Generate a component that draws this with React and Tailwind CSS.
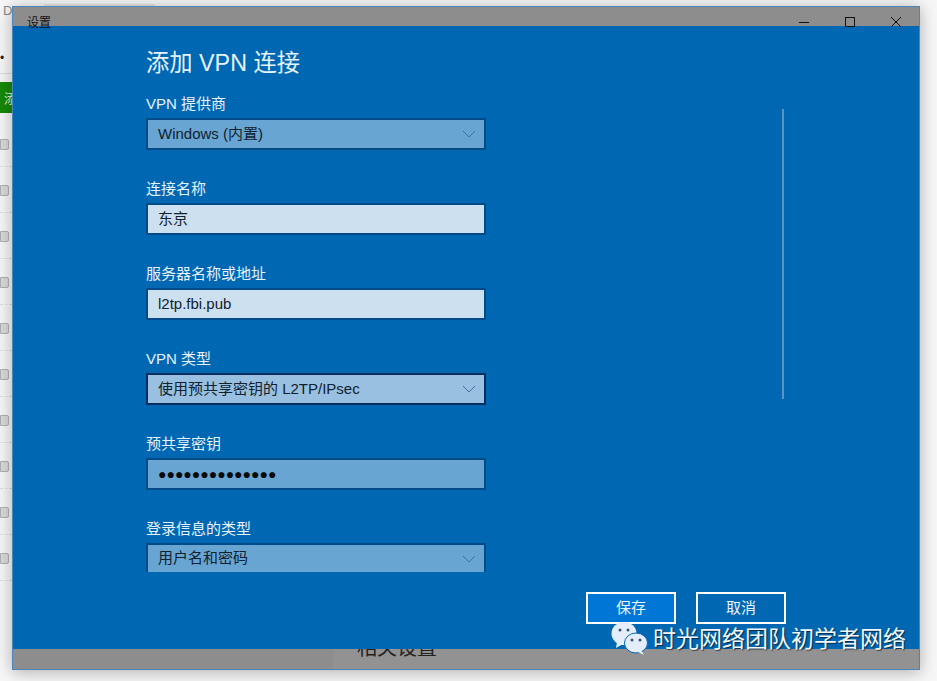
const CJK = "font-['Liberation_Sans','Noto_Sans_CJK_SC',sans-serif]";

function Chevron({ color = "#3a729f" }) {
  return (
    <svg width="14" height="8" viewBox="0 0 14 8" fill="none" stroke={color} strokeWidth="1">
      <path d="M1 1l6 6 6-6" />
    </svg>
  );
}

function Field({ label, value, bg = "bg-[#68a5d2]", border = "border-[#004b87]", chevron, clipBottom, mb = "mb-[29px]", valueClass = "text-[15px]" }) {
  return (
    <div className={mb}>
      <div className="h-[20px] mb-[4px] text-[15px] leading-[20px] text-[#e6f3fb]">{label}</div>
      <div
        className={`w-[340px] border-2 ${border} ${bg} ${clipBottom ? "border-b-0 h-[29px]" : "h-[32px]"} flex items-center justify-between pl-[10px] pr-[8px] text-[#10212f] ${valueClass}`}
      >
        <span>{value}</span>
        {chevron && <Chevron />}
      </div>
    </div>
  );
}

function Wechat() {
  return (
    <svg width="37" height="33" viewBox="0 0 37 33">
      <ellipse cx="13" cy="11.5" rx="12.5" ry="11.5" fill="#e4eefa" />
      <path d="M6 20l-1 6 7-4z" fill="#e4eefa" />
      <circle cx="9" cy="8" r="1.5" fill="#39566e" />
      <circle cx="17" cy="8" r="1.5" fill="#39566e" />
      <ellipse cx="25" cy="21" rx="11.5" ry="10" fill="#e4eefa" stroke="#0a67b0" strokeWidth="1" />
      <path d="M30 28l3 5-6-3z" fill="#e4eefa" />
      <circle cx="21" cy="18" r="1.5" fill="#39566e" />
      <circle cx="29" cy="18" r="1.5" fill="#39566e" />
    </svg>
  );
}

function LeftRow() {
  return (
    <div className="h-[46px] pt-[2px] border-b border-dashed border-[#dedede] flex items-center">
      <div className="w-[9px] h-[11px] bg-[#dadada] border border-[#b0b0b0] rounded-r-[2px]" />
    </div>
  );
}

export default function App() {
  const rows = Array.from({ length: 10 });
  return (
    <div className={`w-[937px] h-[681px] bg-[#f8f7f7] flex overflow-hidden relative ${CJK}`}>
      {/* page behind the window, left strip */}
      <div className="w-[12px] shrink-0 flex flex-col text-[#8a8a8a] text-[13px] overflow-hidden">
        <div className="h-[52px] pt-[2px] pl-[3px] leading-[18px]">D</div>
        <div className="h-[22px] border-b border-[#dddddd] text-[#222] text-[12px] leading-[12px]">•</div>
        <div className="mt-[8px] h-[31px] bg-[#178a08] text-[#d8f0d0] text-[13px] leading-[33px] pl-[4px] overflow-hidden whitespace-nowrap">添</div>
        <div className="h-[8px]" />
        {rows.map((_, i) => (
          <LeftRow key={i} />
        ))}
      </div>

      {/* faint text of the page, mostly hidden by the window */}
      <div className="absolute left-[44px] top-[4px] w-[111px] h-[2px] bg-[#e6e6e6]" />

      {/* settings window */}
      <div className="absolute left-[12px] top-[6px] w-[908px] h-[664px] border border-[#4a86bd] bg-[#0067b3] shadow-[0_2px_16px_rgba(0,0,0,0.3)] flex flex-col">
        <div className="h-[19px] shrink-0 bg-[#8d8d8d] flex items-center justify-between text-[12px] text-[#111]">
          <span className="pl-[14px] pt-[12px]">设置</span>
          <div className="flex items-center gap-[36px] pr-[18px] pt-[11px]">
            <svg width="10" height="10" viewBox="0 0 10 10" stroke="#111" fill="none">
              <path d="M0 5.5h10" />
            </svg>
            <svg width="10" height="10" viewBox="0 0 10 10" stroke="#111" fill="none">
              <rect x="0.5" y="0.5" width="9" height="9" />
            </svg>
            <svg width="10" height="10" viewBox="0 0 10 10" stroke="#111" fill="none">
              <path d="M0 0l10 10M10 0l-10 10" />
            </svg>
          </div>
        </div>

        <div className="flex-1 relative pl-[133px] pt-[19px]">
          <div className="text-[23.3px] leading-[36px] text-[#e6f3fb] mb-[13px]">添加 VPN 连接</div>
          <Field label="VPN 提供商" value="Windows (内置)" chevron />
          <Field label="连接名称" value="东京" bg="bg-[#cce0f0]" />
          <Field label="服务器名称或地址" value="l2tp.fbi.pub" bg="bg-[#cce0f0]" />
          <Field label="VPN 类型" value="使用预共享密钥的 L2TP/IPsec" bg="bg-[#99c0e0]" border="border-[#002f5f]" chevron />
          <Field label="预共享密钥" value="●●●●●●●●●●●●●●" valueClass="text-[14px] [&>span]:text-[#0a0a0a]" />
          <Field label="登录信息的类型" value="用户名和密码" chevron clipBottom mb="mb-0" />

          <div className="absolute left-[769px] top-[83px] w-[2px] h-[290px] bg-[#5a93c4]" />

          <div className="absolute left-[573px] top-[566px] flex gap-[20px]">
            <div className="w-[90px] h-[32px] pt-[1px] border-2 border-white bg-[#0076d7] text-[15px] text-[#eaf4fc] flex items-center justify-center">保存</div>
            <div className="w-[90px] h-[32px] pt-[1px] border-2 border-white text-[15px] text-[#eaf4fc] flex items-center justify-center">取消</div>
          </div>
        </div>

        <div className="h-[20px] shrink-0 bg-[#8d8d8d] flex overflow-hidden">
          <div className="w-[320px] shrink-0" />
          <div className="flex-1 bg-[#929292] pl-[24px] text-[20px] leading-[20px] text-[#222]">
            <div className="-mt-[11px]">相关设置</div>
          </div>
        </div>
      </div>

      {/* watermark */}
      <div className="absolute left-[611px] top-[622px] flex items-center gap-[5px]">
        <Wechat />
        <span className="text-[23px] leading-[32px] text-[#f4f7fa] [text-shadow:1px_1px_1px_rgba(0,0,0,0.6)] whitespace-nowrap">时光网络团队初学者网络</span>
      </div>
    </div>
  );
}
